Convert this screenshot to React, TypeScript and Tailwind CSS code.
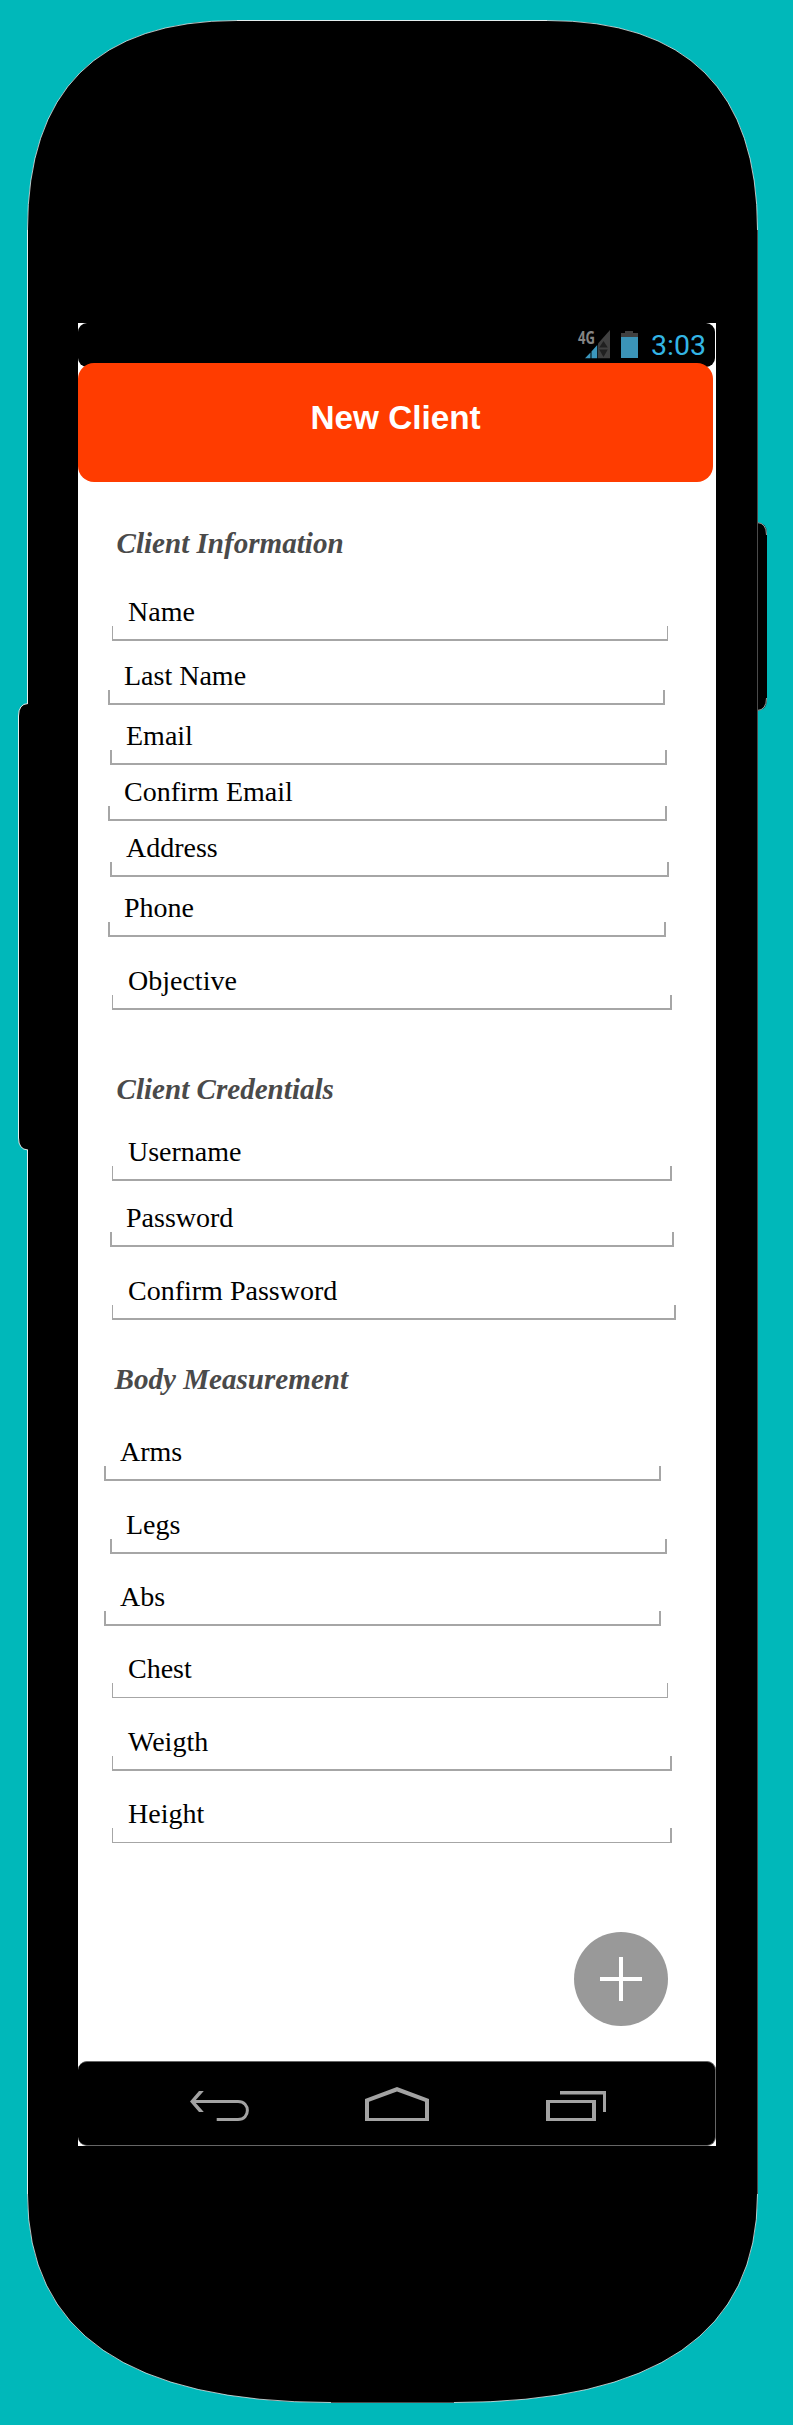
import React from "react";

type FieldProps = { label: string; box: string; line?: string };

const thick = "border-2";
const thinLeft = "border-2 border-l";
const thinSides = "border-x border-b-2";
const thinAll = "border";
const thinLeftBottom = "border-l border-r-2 border-b";

function Field({ label, box, line = thick }: FieldProps) {
  return (
    <label className={"block h-[45px] " + box}>
      <span className="block pl-4 font-['Liberation_Serif',serif] text-[28px] leading-[32px] whitespace-nowrap text-black">
        {label}
      </span>
      <span className={"-mt-[2px] block h-[15px] border-[#a6a6a6] border-t-0! " + line} />
    </label>
  );
}

function Heading({ text, box }: { text: string; box: string }) {
  return (
    <h2
      className={
        "h-8 font-['Liberation_Serif',serif] text-[29.1px] leading-8 font-bold whitespace-nowrap text-[#4a4a4a] italic " +
        box
      }
    >
      {text}
    </h2>
  );
}

function PhoneBody() {
  return (
    <svg className="absolute inset-0" width="793" height="2425" viewBox="0 0 793 2425" aria-hidden="true">
      <path d="M757 522 Q767 523 767 534 V699 Q767 710 757 711 Z" fill="#000" />
      <path
        d="M757 522.500 Q766.500 523 766.500 535 M766.500 698 Q766.500 710 757 710.500"
        fill="none"
        stroke="#fff"
        strokeWidth="0.600"
      />
      <path
        d="M237 20.500 H547 Q757.500 20.500 757.500 230 V2194 Q757.500 2402.500 454 2402.500 H331 Q27.500 2402.500 27.500 2194 V230 Q27.500 20.500 237 20.500 Z"
        fill="#000"
      />
      <path d="M237 20.500 H547 M27.500 2194 V230" fill="none" stroke="#fff" strokeWidth="0.900" />
      <path
        d="M331 2402.500 Q27.500 2402.500 27.500 2194 M27.500 230 Q27.500 20.500 237 20.500 M547 20.500 Q757.500 20.500 757.500 230 M757.500 2194 Q757.500 2402.500 454 2402.500"
        fill="none"
        stroke="#fff"
        strokeWidth="0.700"
      />
      <path d="M757.500 230 V2194 M454 2402.500 H331" fill="none" stroke="#4a4a4a" strokeWidth="1" />
      <path d="M29 703.500 H28 Q18.500 704 18.500 716 V1138 Q18.500 1149.500 28 1150 H29 Z" fill="#000" />
      <path
        d="M28 703.500 Q18.500 704 18.500 716 V1138 Q18.500 1149.500 28 1150"
        fill="none"
        stroke="#fff"
        strokeWidth="0.900"
      />
    </svg>
  );
}

function StatusIcons() {
  return (
    <svg width="64" height="40" viewBox="576 323 64 40" aria-hidden="true">
      <text
        x="578"
        y="343.800"
        textLength="17"
        lengthAdjust="spacingAndGlyphs"
        fill="#858585"
        className="font-['Open_Sans',sans-serif] text-[17px] font-bold"
      >
        4G
      </text>
      <path d="M598 343.500 L610 330 V358.300 H598 Z" fill="#404040" />
      <path d="M603.500 341 L607.800 347.500 H599.200 Z M599.200 349.500 H607.800 L603.500 357 Z" fill="#202020" />
      <path d="M585 358.300 L590.500 352.500 V358.300 Z M591.500 351.500 L597.200 345 V358.300 H591.500 Z" fill="#3b97bd" />
      <path d="M625 331 H633 V333 H638 V337 H621 V333 H625 Z" fill="#404040" />
      <path d="M621 337 H638 V358 H621 Z" fill="#3b94b8" />
    </svg>
  );
}

function StatusBar() {
  return (
    <div className="flex h-[44px] w-[637px] items-start justify-end rounded-[9px] bg-black pr-[8px]">
      <StatusIcons />
      <span className="mt-[6px] ml-[11px] w-[56px] font-['Roboto',sans-serif] text-[28.5px] leading-[34px] whitespace-nowrap text-[#33b5e5]">
        3:03
      </span>
    </div>
  );
}

function NavBar() {
  return (
    <nav className="mt-[35px] h-[85px] w-[638px] rounded-[9px] border-t border-r border-b border-[#666] bg-black">
      <svg width="637" height="83" viewBox="78 2062 637 83" fill="none" stroke="#a3a3a3" aria-hidden="true">
        <path d="M192 2101.500 H238 C250.500 2101.500 250.500 2119.500 238 2119.500 H216.700" strokeWidth="3" />
        <path
          d="M199 2091 H203.800 L194.500 2101.500 L203.800 2112 H199 L190 2101.500 Z"
          fill="#a3a3a3"
          stroke="none"
        />
        <path
          d="M365 2099 L397 2087 L429 2099 V2121 H365 Z M369 2101.800 V2118 H425 V2101.800 L397 2091.500 Z"
          fill="#a3a3a3"
          fillRule="evenodd"
          stroke="none"
        />
        <path
          d="M546 2100 H596 V2121 H546 Z M550 2103 V2118 H592 V2103 Z"
          fill="#a3a3a3"
          fillRule="evenodd"
          stroke="none"
        />
        <path d="M560 2091 H606 V2112 H603 V2094.500 H560 Z" fill="#a3a3a3" stroke="none" />
      </svg>
    </nav>
  );
}

export default function App() {
  return (
    <div className="relative h-[2425px] w-[793px] overflow-hidden bg-[#00b8ba] pt-[323px] pl-[78px]">
      <PhoneBody />
      <main className="relative flex h-[1823px] w-[638px] flex-col items-start bg-white">
        <StatusBar />
        <header className="relative -mt-[4px] h-[119px] w-[635px] rounded-[16px] bg-[#ff3c00] pt-[36px] pl-[232.5px]">
          <h1 className="font-['Liberation_Sans',sans-serif] text-[33.3px] leading-[38px] font-bold whitespace-nowrap text-white">
            New Client
          </h1>
        </header>

        <Heading text="Client Information" box="ml-[38.5px] mt-[45px]" />
        <Field label="Name" box="mt-[37px] ml-[34px] w-[556px]" line={thinSides} />
        <Field label="Last Name" box="mt-[19px] ml-[30px] w-[557px]" />
        <Field label="Email" box="mt-[15px] ml-[32px] w-[557px]" />
        <Field label="Confirm Email" box="mt-[11px] ml-[30px] w-[559px]" />
        <Field label="Address" box="mt-[11px] ml-[32px] w-[559px]" />
        <Field label="Phone" box="mt-[15px] ml-[30px] w-[558px]" />
        <Field label="Objective" box="mt-[28px] ml-[34px] w-[560px]" line={thinLeft} />

        <Heading text="Client Credentials" box="ml-[38.5px] mt-[63px]" />
        <Field label="Username" box="mt-[31px] ml-[34px] w-[560px]" line={thinLeft} />
        <Field label="Password" box="mt-[21px] ml-[32px] w-[564px]" />
        <Field label="Confirm Password" box="mt-[28px] ml-[34px] w-[564px]" line={thinLeft} />

        <Heading text="Body Measurement" box="ml-[36.5px] mt-[43px]" />
        <Field label="Arms" box="mt-[41px] ml-[26px] w-[557px]" />
        <Field label="Legs" box="mt-[28px] ml-[32px] w-[557px]" />
        <Field label="Abs" box="mt-[27px] ml-[26px] w-[557px]" />
        <Field label="Chest" box="mt-[27px] ml-[34px] w-[556px]" line={thinAll} />
        <Field label="Weigth" box="mt-[28px] ml-[34px] w-[560px]" line={thinLeft} />
        <Field label="Height" box="mt-[27px] ml-[34px] w-[560px]" line={thinLeftBottom} />

        <button
          type="button"
          aria-label="Add"
          className="mt-[89px] ml-[495.5px] flex h-[94px] w-[94px] items-center justify-center rounded-full bg-[#999]"
        >
          <svg width="44" height="44" viewBox="0 0 44 44" stroke="#fff" strokeWidth="4">
            <path d="M1 22 H43 M22 0 V44" />
          </svg>
        </button>
        <NavBar />
      </main>
    </div>
  );
}
